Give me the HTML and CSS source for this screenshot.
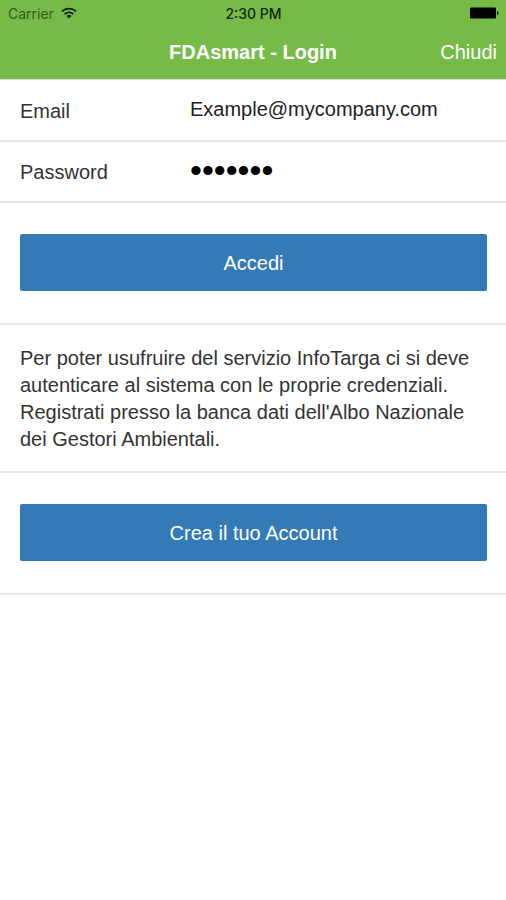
FILE: index.html
```html
<!DOCTYPE html>
<html lang="it">
<head>
<meta charset="utf-8">
<meta name="viewport" content="width=device-width, initial-scale=1">
<title>FDAsmart - Login</title>
<link rel="stylesheet" href="styles.css">
</head>
<body>
<header class="top">
  <div class="status">
    <div class="carrier">
      <span>Carrier</span>
      <svg class="wifi" viewBox="0 0 16 12" aria-hidden="true">
        <path d="M1 4.300a10.500 10.500 0 0 1 14 0M3.600 7.100a6.600 6.600 0 0 1 8.800 0" fill="none" stroke="currentColor" stroke-width="1.800"/>
        <path d="M5.500 9a3.700 3.700 0 0 1 5 0L8 11.400z" fill="currentColor"/>
      </svg>
    </div>
    <span class="time">2:30 PM</span>
    <svg class="battery" viewBox="0 0 30 12" aria-hidden="true">
      <rect x="1" y="0.500" width="26" height="11" rx="1" fill="currentColor"/>
      <path d="M28 4c2 .6 2 3.400 0 4z" fill="currentColor"/>
    </svg>
  </div>
  <nav class="nav">
    <h1 class="title">FDAsmart - Login</h1>
    <a class="close" href="#">Chiudi</a>
  </nav>
</header>
<main class="content">
  <form class="form">
    <div class="row">
      <label class="label" for="email">Email</label>
      <input class="field" id="email" type="email" value="Example@mycompany.com">
    </div>
    <div class="row">
      <label class="label" for="password">Password</label>
      <input class="field secret" id="password" type="password" value="1234567">
    </div>
    <div class="action">
      <button class="button" type="submit">Accedi</button>
    </div>
  </form>
  <p class="note">Per poter usufruire del servizio InfoTarga ci si deve autenticare al sistema con le proprie credenziali. Registrati presso la banca dati dell'Albo Nazionale dei Gestori Ambientali.</p>
  <div class="action">
    <button class="button" type="button">Crea il tuo Account</button>
  </div>
</main>
</body>
</html>
```
FILE: styles.css
```css
* {
  box-sizing: border-box;
}

body {
  margin: 0;
  background: #fff;
  color: #333;
  font-family: "Liberation Sans", Arial, sans-serif;
  font-size: 20px;
}

.top {
  background: #76bb48;
  border-bottom: 1px solid #d3dfcb;
}

.status {
  display: grid;
  grid-template-columns: 1fr auto 1fr;
  align-items: center;
  height: 26px;
  padding: 0 7px 0 8px;
  color: #142408;
  font-family: Inter, "Liberation Sans", sans-serif;
  font-size: 14px;
}

.carrier {
  display: flex;
  align-items: center;
  gap: 7px;
  color: #34591c;
}

.wifi {
  width: 16px;
  height: 12px;
  color: #101c08;
}

.time {
  font-weight: 500;
}

.battery {
  width: 30px;
  height: 12px;
  justify-self: end;
  color: #000;
}

.nav {
  display: grid;
  grid-template-columns: 1fr auto 1fr;
  align-items: center;
  height: 53px;
  padding: 0 9px;
  color: #fff;
}

.title {
  grid-column: 2;
  margin: 0;
  font-size: 20px;
  font-weight: bold;
}

.close {
  justify-self: end;
  color: inherit;
  text-decoration: none;
}

.content {
  padding-top: 1px;
}

.row {
  display: flex;
  align-items: center;
  height: 61px;
  padding: 0 19px 2px 20px;
  border-bottom: 2px solid #e6e6e6;
}

.label {
  flex: 0 0 170px;
  padding-top: 4px;
}

.field {
  flex: 1;
  min-width: 0;
  height: 40px;
  padding: 0;
  border: 0;
  outline: 0;
  background: none;
  color: #222;
  font: inherit;
}

.secret {
  color: #000;
  font-size: 34px;
}

.action {
  padding: 31px 19px 32px 20px;
  border-bottom: 2px solid #e9e9e9;
}

.button {
  display: block;
  width: 100%;
  height: 57px;
  padding: 2px 0 0;
  border: 0;
  border-radius: 2px;
  background: #337ab7;
  color: #fff;
  font: inherit;
}

.note {
  margin: 0;
  padding: 20px 19px 18px 20px;
  border-bottom: 2px solid #e9e9e9;
  line-height: 27px;
}
```
